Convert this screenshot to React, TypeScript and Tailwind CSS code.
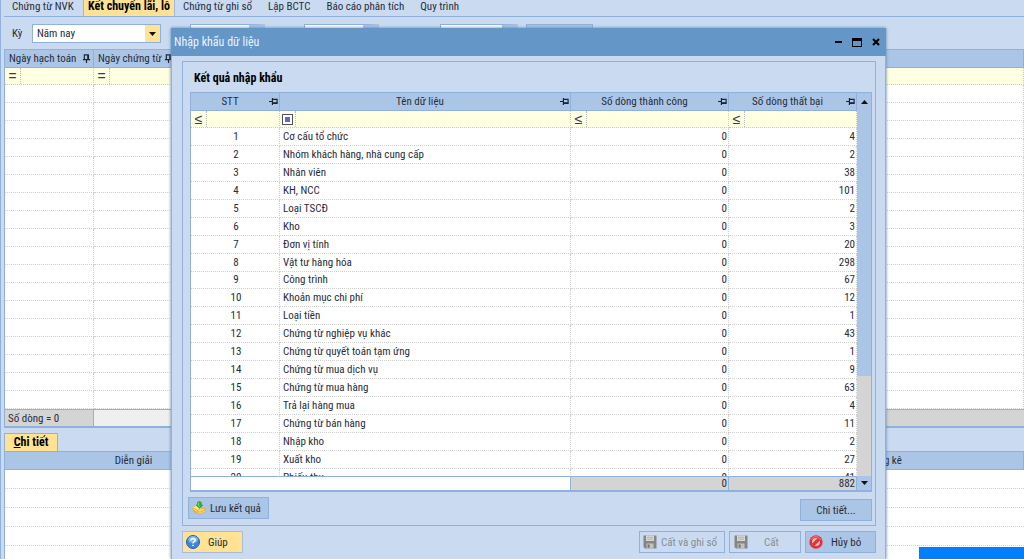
import type { ReactNode } from "react";

const results: [string, number][] = [
  ["Cơ cấu tổ chức", 4],
  ["Nhóm khách hàng, nhà cung cấp", 2],
  ["Nhân viên", 38],
  ["KH, NCC", 101],
  ["Loại TSCĐ", 2],
  ["Kho", 3],
  ["Đơn vị tính", 20],
  ["Vật tư hàng hóa", 298],
  ["Công trình", 67],
  ["Khoản mục chi phí", 12],
  ["Loại tiền", 1],
  ["Chứng từ nghiệp vụ khác", 43],
  ["Chứng từ quyết toán tạm ứng", 1],
  ["Chứng từ mua dịch vụ", 9],
  ["Chứng từ mua hàng", 63],
  ["Trả lại hàng mua", 4],
  ["Chứng từ bán hàng", 11],
  ["Nhập kho", 2],
  ["Xuất kho", 27],
  ["Phiếu thu", 41],
];

function Pin({ side = false }: { side?: boolean }) {
  return (
    <svg viewBox="0 0 10 10" className={side ? "size-[9px] shrink-0 rotate-90" : "size-[9px] shrink-0"} fill="none" stroke="#1c2430" strokeWidth="1.3">
      <path d="M2.6 6V1H7V6M1 6.2H9M5 6.5V10" />
      <path d="M6.8 1V6" strokeWidth="1.9" />
    </svg>
  );
}

function CoinsIcon() {
  return (
    <svg viewBox="0 0 14 14" className="size-[14px] shrink-0">
      <path d="M0.5 6.5L4 4.5L13.3 7.5V11L7.5 13.5L3 11.8L0.5 9.5Z" fill="#e0ae35" />
      <path d="M1 6.4L4.5 4.6L9 7.2L5.5 9Z" fill="#fbe58a" />
      <path d="M5.5 9.5L9.5 7.3L13 8.2L8 11Z" fill="#f8d75f" />
      <path d="M1 8L5.5 10.5M5.6 11.4L8 12.3L13 9.8" stroke="#fff0a5" strokeWidth=".7" fill="none" />
      <path d="M5.5 1.2Q7.5 -0.3 9.3 1.3V4H11L7.5 7.6L4 4H5.5Z" fill="#35ad36" stroke="#15852a" strokeWidth=".4" />
      <path d="M6.6 1.7V4.6L7.6 5.7" stroke="#8be57c" strokeWidth=".8" fill="none" />
    </svg>
  );
}

function HelpIcon() {
  return (
    <svg viewBox="0 0 14 14" className="size-[14px] shrink-0">
      <circle cx="7" cy="7" r="6.5" fill="#3b86e0" stroke="#285fae" strokeWidth="1" />
      <ellipse cx="7" cy="4.6" rx="4.9" ry="3.5" fill="#7db6f4" />
      <path d="M4.9 5.4Q5 3.4 7 3.4Q9.2 3.5 9.1 5.3Q9 6.4 7.8 7Q7 7.5 7 8.5M7 9.7V11.1" fill="none" stroke="#fff" strokeWidth="1.5" />
    </svg>
  );
}

function DiskIcon() {
  return (
    <svg viewBox="0 0 14 14" className="size-[14px] shrink-0">
      <path d="M.5 .5H13.5V13.5H2L.5 12Z" fill="#858585" />
      <path d="M3 .5H11V6H3Z" fill="#d8d8d8" />
      <path d="M4 2.3H10M4 4.2H10" stroke="#a9a9a9" strokeWidth=".8" />
      <path d="M3.5 8.5H10.5V13.5H3.5Z" fill="#c2c2c2" />
      <path d="M4.6 9.5H6.6V12.7H4.6Z" fill="#717171" />
    </svg>
  );
}

function StopIcon() {
  return (
    <svg viewBox="0 0 14 14" className="size-[14px] shrink-0">
      <circle cx="7" cy="7" r="6.7" fill="#e0343a" />
      <circle cx="7" cy="7" r="4" fill="#f3b9b8" />
      <path d="M4 10L10 4" stroke="#e0343a" strokeWidth="3.2" />
      <path d="M2.2 4.6Q3.6 1.7 7 1.5Q10.4 1.7 11.8 4.6" stroke="#f47b78" strokeWidth="1" fill="none" />
    </svg>
  );
}

function HeadCell({ children, left }: { children: ReactNode; left?: boolean }) {
  return (
    <div className={left ? "flex items-center pl-1 pr-[2px]" : "flex items-center pr-px"}>
      <span className={left ? "flex-1 text-left" : "flex-1 text-center"}>{children}</span>
      <Pin side={!left} />
    </div>
  );
}

function FilterCell({ op, label }: { op: ReactNode; label: string }) {
  return (
    <div className="flex h-4 items-center">
      <span className="flex h-4 w-4 shrink-0 items-center justify-center border-r border-dotted border-[#b9bdb5] font-['Liberation_Sans',sans-serif] text-[14px] text-[#3a3a56]">{op}</span>
      <input aria-label={label} className="h-4 w-full min-w-0 bg-transparent px-1 outline-none" />
    </div>
  );
}

const head = "h-[19px] border-y border-r border-[#8fb1dc] bg-[#abc5e7] p-0 font-normal";
const filter = "border-b border-r border-dotted border-[#c8cabb] bg-[#ffffe1] p-0";
const cell = "border-b border-r border-dotted border-[#d0d0d0] p-0";
const foot = "h-[14px] border-r border-t border-[#8fb1dc] p-0 text-right leading-[13px]";
const button = "flex h-[22px] items-center border border-[#8fb1dc] bg-[#abc5e7]";
const disabled = "flex h-[22px] items-center border border-[#8fb1dc] text-[#858d98]";

function Background() {
  const tabs = ["Chứng từ ghi sổ", "Lập BCTC", "Báo cáo phân tích", "Quy trình"];
  return (
    <div className="flex h-full flex-col border-l border-[#8fb1dc] pl-[3px]">
      <nav className="flex h-[17px] shrink-0 items-start border-b border-[#8fb1dc] leading-[13px]">
        <a href="#nvk" className="w-[79px] pl-2">Chứng từ NVK</a>
        <a href="#ketchuyen" className="h-4 w-[92px] border-x border-[#9db8dc] bg-[#ffe294] text-center text-[12px] font-bold leading-[13px] text-black">Kết chuyển lãi, lỗ</a>
        <div className="flex gap-4 pl-2">
          {tabs.map((t) => (
            <a key={t} href="#tab">{t}</a>
          ))}
        </div>
      </nav>
      <form className="flex h-8 shrink-0 items-start pl-2 pt-[7px]">
        <label htmlFor="period" className="w-5 leading-[19px]">Kỳ</label>
        <div className="relative h-[19px] w-[129px]">
          <select id="period" className="h-full w-full appearance-none border border-[#8fb1dc] bg-white px-1 outline-none">
            <option>Năm nay</option>
          </select>
          <span className="pointer-events-none absolute inset-y-px right-px flex w-[15px] items-center justify-center bg-[#ffe294]">
            <svg viewBox="0 0 7 4" className="h-1 w-[7px]"><path d="M0 0H7L3.5 4Z" fill="#111" /></svg>
          </span>
        </div>
        <input aria-label="Từ" className="ml-[29px] h-[19px] w-[75px] border border-r-[16px] border-[#8fb1dc] border-r-[#abc5e7] bg-white" />
        <input aria-label="Đến" className="ml-[39px] h-[19px] w-[75px] border border-r-[16px] border-[#8fb1dc] border-r-[#abc5e7] bg-white" />
        <input aria-label="Loại" className="ml-[61px] h-[19px] w-[78px] border border-r-[16px] border-[#8fb1dc] border-r-[#abc5e7] bg-white" />
        <button type="button" aria-label="Lấy dữ liệu" className="ml-2 h-[19px] w-[67px] border border-[#8fb1dc] bg-[#abc5e7]" />
      </form>
      <table className="h-[379px] w-full shrink-0 table-fixed border-separate border-spacing-0 border-b-2 border-l border-[#8fb1dc] bg-white">
        <colgroup>
          <col className="w-[89px]" />
          <col className="w-[82px]" />
          <col />
        </colgroup>
        <thead>
          <tr>
            <th className={head}><HeadCell left>Ngày hạch toán</HeadCell></th>
            <th className={head}><HeadCell left>Ngày chứng từ</HeadCell></th>
            <th className={head} />
          </tr>
          <tr>
            <td className={filter}><FilterCell op="=" label="Lọc ngày hạch toán" /></td>
            <td className={filter}><FilterCell op="=" label="Lọc ngày chứng từ" /></td>
            <td className={filter} />
          </tr>
        </thead>
        <tbody>
          {Array.from({ length: 18 }, (_, i) => (
            <tr key={i}>
              <td className={cell} />
              <td className={cell} />
              <td className={cell} />
            </tr>
          ))}
        </tbody>
        <tfoot>
          <tr>
            <td className="h-[17px] border-r border-t border-[#8fb1dc] bg-[#d4d4d4] p-0 pl-[3px]">Số dòng = 0</td>
            <td className="border-t border-[#8fb1dc] bg-[#efefef] p-0" />
            <td className="border-t border-[#8fb1dc] bg-[#d4d4d4] p-0" />
          </tr>
        </tfoot>
      </table>
      <div className="mt-[5px] flex h-[18px] shrink-0">
        <button className="h-full w-[54px] border border-b-0 border-[#8fb1dc] bg-[#ffe294] text-[12px] font-bold leading-[15px] text-black"><u>C</u>hi tiết</button>
      </div>
      <table className="w-full table-fixed border-separate border-spacing-0 border-l border-[#8fb1dc] bg-white">
        <colgroup>
          <col className="w-[258px]" />
          <col />
          <col className="w-[162px]" />
        </colgroup>
        <thead>
          <tr>
            <th className={head}>Diễn giải</th>
            <th className={head} />
            <th className={`${head} text-left`}>Thống kê</th>
          </tr>
        </thead>
        <tbody>
          {Array.from({ length: 5 }, (_, i) => (
            <tr key={i}>
              <td colSpan={3} className="h-[19px] border-b border-dotted border-[#d0d0d0] p-0" />
            </tr>
          ))}
        </tbody>
      </table>
    </div>
  );
}

function ResultColumns() {
  return (
    <colgroup>
      <col className="w-[89px]" />
      <col />
      <col className="w-[158px]" />
      <col className="w-[128px]" />
    </colgroup>
  );
}

function ImportDialog() {
  return (
    <section role="dialog" aria-labelledby="dialog-title" className="absolute bottom-0 left-[171px] right-[138px] top-7 flex flex-col bg-[#cadbf1] shadow-[0_0_3px_#5b7ba5]">
      <header className="flex h-7 shrink-0 items-center bg-[#6496c8] pl-[3px] pr-[6px]">
        <h1 id="dialog-title" className="flex-1 text-[12px] text-[#eaf3ff]">Nhập khẩu dữ liệu</h1>
        <div className="flex items-center gap-[10px]">
          <button aria-label="Thu nhỏ" className="h-[2px] w-[7px] bg-black" />
          <button aria-label="Phóng to" className="h-[9px] w-[10px] border border-t-[3px] border-black" />
          <button aria-label="Đóng">
            <svg viewBox="0 0 8 8" className="size-2"><path d="M1 1L7 7M7 1L1 7" stroke="#000" strokeWidth="2" /></svg>
          </button>
        </div>
      </header>
      <div className="flex min-h-0 flex-1 flex-col border-x border-[#8fb1dc] pb-[6px] pl-[10px] pr-[9px] pt-[5px]">
        <div className="flex min-h-0 flex-1 flex-col border border-[#8fb1dc] px-[3px] pb-1">
          <h2 className="h-[30px] pl-2 pt-1 text-[12px] font-bold leading-6 text-black">Kết quả nhập khẩu</h2>
          <div className="ml-1 flex min-h-0 flex-1 overflow-hidden border-b-2 border-l border-[#8fb1dc] bg-white">
            <div className="flex min-w-0 flex-1 flex-col">
              <div className="min-h-0 flex-1 overflow-hidden">
                <table className="h-[395px] w-full table-fixed border-separate border-spacing-0">
                  <ResultColumns />
                  <thead>
                    <tr>
                      <th className={head}><HeadCell>STT</HeadCell></th>
                      <th className={head}><HeadCell>Tên dữ liệu</HeadCell></th>
                      <th className={head}><HeadCell>Số dòng thành công</HeadCell></th>
                      <th className={head}><HeadCell>Số dòng thất bại</HeadCell></th>
                    </tr>
                    <tr>
                      <td className={filter}><FilterCell op="≤" label="Lọc STT" /></td>
                      <td className={filter}>
                        <FilterCell
                          label="Lọc tên dữ liệu"
                          op={<span className="size-[11px] border border-[#50506c] bg-[#6666cc] shadow-[inset_0_0_0_2px_#fff]" />}
                        />
                      </td>
                      <td className={filter}><FilterCell op="≤" label="Lọc số dòng thành công" /></td>
                      <td className={filter}><FilterCell op="≤" label="Lọc số dòng thất bại" /></td>
                    </tr>
                  </thead>
                  <tbody>
                    {results.map(([name, failed], i) => (
                      <tr key={name}>
                        <td className={`${cell} pl-[2px] text-center`}>{i + 1}</td>
                        <td className={cell}><span className="pl-[3px]">{name}</span></td>
                        <td className={`${cell} text-right`}><span className="pr-px">0</span></td>
                        <td className={`${cell} text-right`}><span className="pr-px">{failed}</span></td>
                      </tr>
                    ))}
                  </tbody>
                </table>
              </div>
              <table className="w-full shrink-0 table-fixed border-separate border-spacing-0">
                <ResultColumns />
                <tbody>
                  <tr>
                    <td colSpan={2} className={`${foot} bg-white`} />
                    <td className={`${foot} bg-[#d4d4d4]`}><span className="pr-px">0</span></td>
                    <td className={`${foot} bg-[#d4d4d4]`}><span className="pr-px">882</span></td>
                  </tr>
                </tbody>
              </table>
            </div>
            <div className="flex w-[15px] shrink-0 flex-col border-r border-t border-[#8fb1dc] bg-[#d4d4d4]">
              <div className="flex flex-1 flex-col">
                <button aria-label="Cuộn lên" className="flex h-[17px] items-center justify-center bg-[#abc5e7]">
                  <svg viewBox="0 0 7 4" className="h-1 w-[7px]"><path d="M0 4H7L3.5 0Z" fill="#111" /></svg>
                </button>
                <div className="h-[266px] bg-[#abc5e7]" />
              </div>
              <button aria-label="Cuộn xuống" className="flex h-[14px] items-center justify-center bg-[#abc5e7]">
                <svg viewBox="0 0 7 4" className="h-1 w-[7px]"><path d="M0 0H7L3.5 4Z" fill="#111" /></svg>
              </button>
            </div>
          </div>
          <div className="mt-[5px] flex shrink-0 items-start justify-between pl-[2px]">
            <button className={`${button} w-[81px] gap-1 px-[3px]`}><CoinsIcon />Lưu kết quả</button>
            <button className={`${button} mt-[2px] w-[72px] justify-center`}>Chi tiết...</button>
          </div>
        </div>
        <div className="mt-[5px] flex shrink-0 items-center">
          <button className="flex h-[22px] w-[61px] items-center gap-2 border border-[#a9bddb] bg-[#ffe294] px-[3px]"><HelpIcon />Giúp</button>
          <div className="ml-auto flex gap-1">
            <button disabled className={`${disabled} w-[86px] gap-1 px-[3px]`}><DiskIcon />Cất và ghi sổ</button>
            <button disabled className={`${disabled} w-[72px] gap-4 px-1`}><DiskIcon />Cất</button>
            <button className={`${button} w-[71px] gap-2 px-[3px]`}><StopIcon />Hủy bỏ</button>
          </div>
        </div>
      </div>
    </section>
  );
}

export default function App() {
  return (
    <main className="relative h-screen overflow-hidden whitespace-nowrap bg-[#cadbf1] font-['Roboto_Condensed','Liberation_Sans',sans-serif] text-[11px] leading-[15px] text-[#262d3a]">
      <Background />
      <ImportDialog />
      <div className="absolute bottom-0 right-0 h-3 w-[105px] bg-[#0080ff]" />
    </main>
  );
}
